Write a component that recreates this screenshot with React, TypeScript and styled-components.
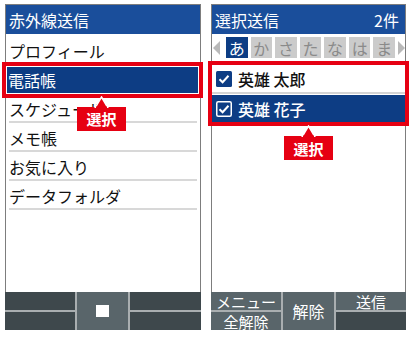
import styled, { createGlobalStyle } from "styled-components";

const GlobalStyle = createGlobalStyle`
  body {
    margin: 0;
    background: #fff;
    font-family: "Noto Sans CJK JP", "Noto Sans", sans-serif;
  }
  * { box-sizing: border-box; }
`;

const Page = styled.div`
  display: flex;
  gap: 10px;
  width: 410px;
  height: 337px;
  padding: 4px 0 0 5px;
`;

const Phone = styled.div<{ $w: number }>`
  position: relative;
  width: ${(p) => p.$w}px;
  height: 326px;
  display: flex;
  flex-direction: column;
  border: 1px solid #7d7d7d;
  border-bottom: none;
`;

const Header = styled.div`
  height: 29px;
  display: flex;
  align-items: center;
  justify-content: space-between;
  padding: 0 6px 0 3px;
  background: #1a4e9b;
  color: #fff;
  font-size: 16px;
`;

const List = styled.div`
  flex: 1;
  padding-top: 2px;
`;

const Row = styled.div<{ $line?: boolean }>`
  position: relative;
  height: 29px;
  display: flex;
  align-items: center;
  padding: 0 3px;
  font-size: 16px;
  color: #111;
  &::after {
    content: "";
    display: ${(p) => (p.$line === false ? "none" : "block")};
    position: absolute;
    left: 3px;
    right: 3px;
    bottom: 0;
    height: 2px;
    background: #d8d8d8;
  }
`;

const Highlight = styled.div`
  position: relative;
  flex: 1;
  height: 26px;
  margin: 0 -1px 0 -2px;
  padding-left: 1px;
  display: flex;
  align-items: center;
  background: #0d3d84;
  color: #fff;
  outline: 4px solid #e60012;
  outline-offset: 1px;
`;

const Callout = styled.div<{ $left: number; $top: number }>`
  position: absolute;
  left: ${(p) => p.$left}px;
  top: calc(100% + ${(p) => p.$top}px);
  width: 49px;
  height: 24px;
  display: flex;
  align-items: center;
  justify-content: center;
  background: #e60012;
  color: #fff;
  font-size: 15px;
  font-weight: 700;
  z-index: 2;
  svg {
    position: absolute;
    left: 17px;
    top: -11px;
  }
`;

const Tabs = styled.div`
  height: 25px;
  display: flex;
  align-items: center;
  gap: 3px;
  padding: 2px 0 0 1px;
`;

const Arrow = styled.div<{ $dir: "left" | "right" }>`
  width: 0;
  height: 0;
  border-top: 7px solid transparent;
  border-bottom: 7px solid transparent;
  ${(p) =>
    p.$dir === "left"
      ? "border-right: 7px solid #b9b9b9; margin-right: 3px;"
      : "border-left: 7px solid #b9b9b9; margin-left: 0;"}
`;

const Tab = styled.div<{ $active?: boolean }>`
  width: 22px;
  height: 21px;
  display: flex;
  align-items: center;
  justify-content: center;
  font-size: 16px;
  background: ${(p) => (p.$active ? "#0d3d84" : "#cbcbcb")};
  color: ${(p) => (p.$active ? "#fff" : "#8a8a8a")};
`;

const Group = styled.div`
  position: relative;
  margin-top: 4px;
  outline: 4px solid #e60012;
  outline-offset: 0;
`;

const Contact = styled.div<{ $selected?: boolean }>`
  height: 27px;
  display: flex;
  align-items: center;
  gap: 6px;
  padding-left: 4px;
  font-size: 16px;
  font-weight: 500;
  background: ${(p) => (p.$selected ? "#0d3d84" : "#fff")};
  color: ${(p) => (p.$selected ? "#fff" : "#111")};
`;

const Divider = styled.div`
  height: 3px;
  border-top: 2px solid #d4d4d4;
`;

const Keys = styled.div`
  height: 38px;
  display: grid;
  grid-template-columns: 70px 51px 1fr;
  grid-template-rows: 18px 18px;
  gap: 2px;
  background: #a9aeb0;
  margin: 0 -1px;
`;

const Key = styled.div<{ $light?: boolean; $col: number; $row?: number }>`
  grid-column: ${(p) => p.$col};
  grid-row: ${(p) => (p.$row ? p.$row : "1 / 3")};
  display: flex;
  align-items: center;
  justify-content: center;
  overflow: hidden;
  white-space: nowrap;
  background: ${(p) => (p.$light ? "#59656a" : "#3e484c")};
  color: #fff;
  font-size: ${(p) => (p.$row ? 15 : 16)}px;
  line-height: 1;
`;

const Stop = styled.div`
  width: 13px;
  height: 12px;
  background: #fff;
`;

const Pointer = () => (
  <svg width="15" height="12" viewBox="0 0 15 12">
    <path d="M7.5 1 L14 12 L1 12 Z" fill="#e60012" stroke="#fff" strokeWidth="1.5" />
    <rect x="2" y="10.5" width="11" height="2" fill="#e60012" />
  </svg>
);

const Check = ({ filled }: { filled: boolean }) => (
  <svg width="16" height="16" viewBox="0 0 16 16">
    {filled ? (
      <rect x="0" y="0" width="16" height="16" rx="1.5" fill="#0d3d84" />
    ) : (
      <rect x="0.75" y="0.75" width="14.5" height="14.5" rx="1.5" fill="none" stroke="#fff" strokeWidth="1.5" />
    )}
    <path d="M3.5 8.2 L6.6 11.2 L12.5 4.8" fill="none" stroke="#fff" strokeWidth="2" />
  </svg>
);

const menu = ["スケジュール", "メモ帳", "お気に入り", "データフォルダ"];
const kana = ["か", "さ", "た", "な", "は", "ま"];

export default function App() {
  return (
    <>
      <GlobalStyle />
      <Page>
        <Phone $w={196}>
          <Header>赤外線送信</Header>
          <List>
            <Row $line={false}>プロフィール</Row>
            <Row $line={false}>
              <Highlight>
                電話帳
                <Callout $left={70} $top={14}>
                  <Pointer />
                  選択
                </Callout>
              </Highlight>
            </Row>
            {menu.map((m) => (
              <Row key={m}>{m}</Row>
            ))}
          </List>
          <Keys>
            <Key $col={1} $row={1} />
            <Key $col={1} $row={2} />
            <Key $col={2} $light>
              <Stop />
            </Key>
            <Key $col={3} $row={1} />
            <Key $col={3} $row={2} />
          </Keys>
        </Phone>
        <Phone $w={195}>
          <Header>
            <span>選択送信</span>
            <span>2件</span>
          </Header>
          <Tabs>
            <Arrow $dir="left" />
            <Tab $active>あ</Tab>
            {kana.map((k) => (
              <Tab key={k}>{k}</Tab>
            ))}
            <Arrow $dir="right" />
          </Tabs>
          <List>
            <Group>
              <Contact>
                <Check filled />
                英雄 太郎
              </Contact>
              <Divider />
              <Contact $selected>
                <Check filled={false} />
                英雄 花子
              </Contact>
              <Callout $left={72} $top={14}>
                <Pointer />
                選択
              </Callout>
            </Group>
          </List>
          <Keys>
            <Key $col={1} $row={1} $light>メニュー</Key>
            <Key $col={1} $row={2} $light>全解除</Key>
            <Key $col={2} $light>解除</Key>
            <Key $col={3} $row={1} $light>送信</Key>
            <Key $col={3} $row={2} />
          </Keys>
        </Phone>
      </Page>
    </>
  );
}
